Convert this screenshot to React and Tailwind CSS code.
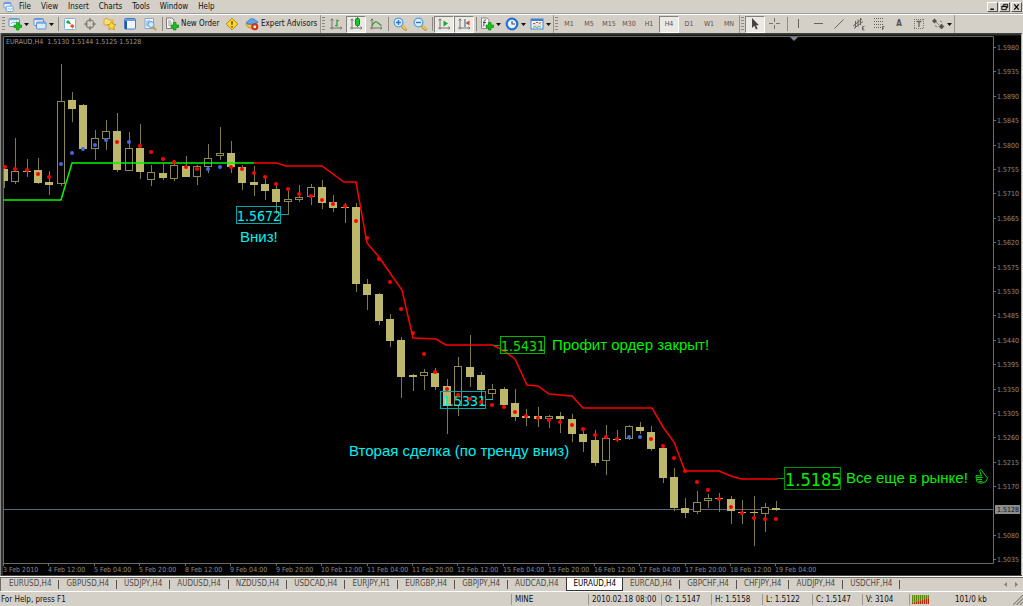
import React, { useState } from 'react';
import clsx from 'clsx';

const MENUS = ['File', 'View', 'Insert', 'Charts', 'Tools', 'Window', 'Help'];
const TIMEFRAMES = ['M1', 'M5', 'M15', 'M30', 'H1', 'H4', 'D1', 'W1', 'MN'];
const TABS = [
    'EURUSD,H4', 'GBPUSD,H4', 'USDJPY,H4', 'AUDUSD,H4', 'NZDUSD,H4', 'USDCAD,H4', 'EURJPY,H1', 'EURGBP,H4',
    'GBPJPY,H4', 'AUDCAD,H4', 'EURAUD,H4', 'EURCAD,H4', 'GBPCHF,H4', 'CHFJPY,H4', 'AUDJPY,H4', 'USDCHF,H4',
];
const TIMES = [
    '3 Feb 2010', '4 Feb 12:00', '5 Feb 04:00', '5 Feb 20:00', '8 Feb 12:00', '9 Feb 04:00', '9 Feb 20:00',
    '10 Feb 12:00', '11 Feb 04:00', '11 Feb 20:00', '12 Feb 12:00', '15 Feb 04:00', '15 Feb 20:00',
    '16 Feb 12:00', '17 Feb 04:00', '17 Feb 20:00', '18 Feb 12:00', '19 Feb 04:00',
];

// high, body top, body bottom, low, rising, dot, dot is blue
const BARS = [
    [165, 169, 181, 188, 0, 167, 0], [138, 171, 182, 184, 1, 169, 0], [159, 171, 172, 177, 0, 170, 0],
    [158, 170, 183, 184, 0, 174, 0], [171, 182, 185, 195, 0, 177, 0], [64, 101, 184, 186, 1, 164, 1],
    [92, 100, 109, 122, 0, 153, 1], [104, 105, 149, 150, 0, 149, 1], [130, 138, 149, 160, 1, 145, 1],
    [120, 131, 139, 150, 1, 140, 1], [113, 131, 170, 172, 0, 142, 0], [132, 148, 171, 171, 1, 142, 1],
    [124, 148, 172, 179, 0, 146, 0], [165, 172, 180, 186, 1, 152, 0], [164, 173, 178, 180, 0, 159, 0],
    [160, 165, 179, 181, 1, 162, 0], [156, 166, 177, 177, 0, 167, 0], [165, 166, 177, 185, 1, 169, 0],
    [144, 158, 167, 173, 1, 169, 1], [127, 153, 156, 160, 1, 167, 1], [141, 153, 167, 173, 0, 167, 0],
    [165, 167, 183, 190, 0, 169, 0], [166, 182, 185, 196, 0, 173, 0], [179, 184, 191, 200, 0, 177, 0],
    [184, 189, 202, 214, 0, 184, 0], [191, 199, 202, 215, 1, 189, 0], [185, 197, 200, 202, 1, 194, 0],
    [184, 187, 197, 205, 1, 196, 0], [180, 187, 203, 209, 0, 200, 0], [195, 202, 208, 212, 0, 204, 0],
    [203, 207, 208, 223, 0, 206, 0], [203, 207, 284, 292, 0, 221, 0], [279, 284, 295, 310, 0, 238, 0],
    [293, 294, 321, 325, 0, 259, 0], [314, 319, 341, 347, 0, 282, 0], [337, 340, 377, 398, 0, 309, 0],
    [374, 375, 377, 391, 0, 333, 0], [369, 372, 376, 390, 1, 354, 0], [368, 373, 387, 390, 0, 372, 0],
    [379, 386, 406, 434, 0, 389, 0], [357, 366, 406, 416, 1, 395, 0], [335, 367, 377, 387, 0, 399, 0],
    [372, 375, 390, 406, 0, 402, 0], [384, 389, 394, 399, 1, 405, 0], [387, 389, 405, 405, 0, 407, 0],
    [389, 403, 417, 421, 0, 412, 0], [409, 416, 418, 426, 0, 416, 0], [407, 416, 419, 427, 0, 418, 0],
    [415, 416, 419, 428, 1, 420, 0], [412, 416, 419, 433, 0, 422, 0], [414, 419, 434, 442, 0, 425, 0],
    [429, 434, 442, 452, 0, 429, 0], [430, 440, 463, 466, 0, 435, 0], [425, 438, 461, 475, 1, 437, 0],
    [430, 439, 440, 442, 0, 439, 0], [425, 426, 439, 440, 1, 437, 1], [422, 427, 431, 434, 0, 437, 1],
    [426, 432, 449, 451, 0, 439, 0], [447, 448, 478, 483, 0, 446, 0], [468, 477, 508, 511, 0, 458, 0],
    [498, 508, 513, 518, 0, 471, 0], [491, 502, 512, 514, 1, 482, 0], [494, 498, 501, 508, 1, 490, 0],
    [493, 498, 499, 512, 0, 499, 0], [496, 499, 511, 524, 0, 507, 0], [500, 512, 513, 524, 0, 513, 0],
    [496, 512, 513, 546, 0, 518, 0], [503, 507, 514, 532, 1, 519, 0], [501, 508, 510, 511, 0, 519, 0],
];

const barX = (i) => Math.round(3.8 + i * 11.36);

const UP_LINE = '3,200 61,200 72,163 254,163';
const DOWN_LINE =
    '254,163 277,163 286,166 322,166 344,182 356,182 367,243 379,257 390,273 402,290 413,338 436,339 446,345 493,345 504,351 515,359 527,385 538,386 549,394 572,396 583,408 652,408 663,427 674,442 685,471 719,471 731,476 741,479 777,479';

const Icon = ({ children }) => (
    <svg viewBox="0 0 14 14" className="h-[14px] w-[14px] shrink-0" fill="none" aria-hidden="true">
        {children}
    </svg>
);

const Plus = () => (
    <path d="M8.5 5.500h2.500v2.500h2.500v2.500h-2.500v2.500h-2.500v-2.500h-2.500v-2.500h2.500z" fill="#17c41c" stroke="#078a0c" strokeWidth=".7" />
);

const Axes = () => <path d="M3 2v10.500M1 11h12M1.700 3.500L3 1.800l1.300 1.700M11.500 9.700L13 11l-1.500 1.300" stroke="#77746e" />;

const Magnifier = ({ plus }) => (
    <Icon>
        <path d="M8.500 8.500l4 4" stroke="#c08a1c" strokeWidth="2.800" strokeLinecap="round" />
        <path d="M8.800 8.500l3.700 3.700" stroke="#f3cf63" strokeWidth="1.400" strokeLinecap="round" />
        <circle cx="5.500" cy="5.500" r="4.300" fill="#d9efff" stroke="#5b9fd8" strokeWidth="1.300" />
        <path d={plus ? 'M3 5.500h5M5.500 3v5' : 'M3 5.500h5'} stroke="#2f6fb5" strokeWidth="1.300" />
    </Icon>
);

const icons = {
    newChart: (
        <Icon>
            <rect x="1" y="1.500" width="10.500" height="8" rx="1" fill="#f4f9ff" stroke="#5b8fcf" />
            <path d="M1 2.500h10.500" stroke="#7fb0e8" strokeWidth="1.500" />
            <path d="M3 7l2-2 2 1 2-1.500" stroke="#8aa" />
            <Plus />
        </Icon>
    ),
    profiles: (
        <Icon>
            <rect x="1" y="1.500" width="9.500" height="7" rx="1" fill="#f4f9ff" stroke="#5b8fcf" />
            <path d="M1 2.500h9.500" stroke="#6ea3e0" strokeWidth="1.500" />
            <rect x="3.500" y="5" width="9.500" height="7" rx="1" fill="#dbe9f8" stroke="#5b8fcf" />
            <path d="M3.500 6h9.500" stroke="#6ea3e0" strokeWidth="1.500" />
        </Icon>
    ),
    marketWatch: (
        <Icon>
            <rect x="1.500" y="1.500" width="11" height="11" rx="1" fill="#fff" stroke="#79aee6" />
            <path d="M3 5l2-2 2 2-2 2z" fill="#22a833" />
            <path d="M5.500 5l2 2" stroke="#22a833" strokeWidth="1.500" />
            <path d="M7 9l2-2 2.500 2-2 2.500z" fill="#e2502a" />
        </Icon>
    ),
    target: (
        <Icon>
            <circle cx="7" cy="7" r="4" stroke="#77746e" strokeWidth="1.200" />
            <path d="M7 1v4M7 9v4M1 7h4M9 7h4" stroke="#77746e" strokeWidth="1.200" />
        </Icon>
    ),
    navigator: (
        <Icon>
            <path d="M1 3l1-1.500h3L6 3h4v5H1z" fill="#fbe07a" stroke="#cf9c1e" strokeWidth=".8" />
            <path d="M8.500 4.500l1.500 2.700 3 .5-2.200 2.100.5 3L8.500 11.400l-2.700 1.400.5-3L4.200 7.700l3-.5z" fill="#ffd83a" stroke="#c28d12" strokeWidth=".8" />
        </Icon>
    ),
    terminal: (
        <Icon>
            <rect x="1.500" y="1.500" width="11" height="10.500" rx="1" fill="#fff" stroke="#3a7fd0" />
            <path d="M2 3h10" stroke="#3a7fd0" strokeWidth="1.500" />
            <path d="M3 4v8" stroke="#26599c" strokeWidth="2" />
            <path d="M5.500 6h6M5.500 8h6M5.500 10h6" stroke="#d5dbe2" strokeWidth=".7" />
        </Icon>
    ),
    tester: (
        <Icon>
            <path d="M2 1.500h8.500v10H2z" fill="#f5faff" stroke="#7aa9dd" />
            <path d="M4 3.500v6M6 3v5M8 4v4" stroke="#4d7ea8" strokeWidth=".8" />
            <path d="M10 10l2.500 2.500" stroke="#d69b27" strokeWidth="2" strokeLinecap="round" />
            <circle cx="8" cy="7.500" r="3" fill="#cfe9ff" stroke="#5b9fd8" />
        </Icon>
    ),
    order: (
        <Icon>
            <path d="M1.500 1h5.500l2 2v8.500H1.500z" fill="#f3f3f3" stroke="#7d7d7d" />
            <path d="M3 4h3M3 6h4M3 8h3" stroke="#8b8b8b" strokeWidth=".8" />
            <Plus />
        </Icon>
    ),
    editor: (
        <Icon>
            <path d="M7 1.200L12.800 7 7 12.800 1.200 7z" fill="#ffd62e" stroke="#b98a0a" />
            <path d="M7 4v3.800M7 9v1.400" stroke="#5c4607" strokeWidth="1.400" />
        </Icon>
    ),
    expert: (
        <Icon>
            <path d="M1 6.500c2 1 8 1 11 0v2C11 12 3 12 2 9z" fill="#f0c040" stroke="#b78518" strokeWidth=".7" />
            <path d="M1 5.500c1-1 2-1 2.500-1.500C4 1.500 9 .500 10.500 3.500c1 .500 2 .500 2.500 1.500-2 3-10 3-12 .5z" fill="#5ea7e6" stroke="#2d71b5" strokeWidth=".7" />
            <circle cx="9.800" cy="9.800" r="3.200" fill="#e23a1c" stroke="#ad1d08" strokeWidth=".6" />
            <rect x="8.600" y="8.600" width="2.400" height="2.400" fill="#fff" />
        </Icon>
    ),
    bars: (
        <Icon>
            <Axes />
            <path d="M8 2.500v7M8 3.500h2M6 8.500h2" stroke="#2f9a35" strokeWidth="1.200" />
        </Icon>
    ),
    candles: (
        <Icon>
            <Axes />
            <path d="M8.500 0v10" stroke="#0b8c14" />
            <rect x="6.500" y="1.500" width="4" height="7" rx="1" fill="#1ec52a" stroke="#0b8c14" />
        </Icon>
    ),
    line: (
        <Icon>
            <Axes />
            <path d="M3 9c1.500-3 3-4.500 4.500-4S10 7 12.500 8.500" stroke="#2f9a35" strokeWidth="1.200" />
        </Icon>
    ),
    autoScroll: (
        <Icon>
            <Axes />
            <path d="M6.500 3.500l4.500 3-4.500 3z" fill="#1ea82a" />
        </Icon>
    ),
    chartShift: (
        <Icon>
            <Axes />
            <path d="M8 2v8" stroke="#3c78b5" strokeWidth="1.200" />
            <path d="M8.500 6l4-2.500v5z" fill="#d9481f" />
        </Icon>
    ),
    indicators: (
        <Icon>
            <path d="M1.500 1h5.500l2 2v8.500H1.500z" fill="#f6f6f6" stroke="#8a8a8a" />
            <path d="M6 3c-2-.5-2 1-2 2.500S4 9 3 9.500M3 5.500h3" stroke="#444" />
            <Plus />
        </Icon>
    ),
    clock: (
        <Icon>
            <circle cx="7" cy="7" r="5.300" fill="#eaf5ff" stroke="#2a6fd0" strokeWidth="2.200" />
            <path d="M7 4v3h3" stroke="#2c4b72" strokeWidth="1.100" />
        </Icon>
    ),
    template: (
        <Icon>
            <rect x="1" y="2" width="12" height="10" fill="#f4f9ff" stroke="#3f83cf" />
            <path d="M1 3h12" stroke="#3f83cf" strokeWidth="2" />
            <path d="M3 6.500h2l1-1h2l1 1 2-1" stroke="#b0413a" strokeWidth=".9" />
            <path d="M2.500 8h9" stroke="#9ab" strokeWidth=".6" />
            <path d="M3 10.500l2-1 2 1 2-1 2 .7" stroke="#2f9a35" strokeWidth=".9" />
        </Icon>
    ),
    cursor: (
        <Icon>
            <path d="M4 1v10l2.300-2.200L8 12.500l1.600-.8L8 8.200h3z" fill="#444" />
        </Icon>
    ),
    crosshair: (
        <Icon>
            <path d="M6.500 1v4M6.500 8v4M1 6.500h4M8 6.500h4" stroke="#77746e" />
        </Icon>
    ),
    vline: <Icon><path d="M6.500 2v9" stroke="#66635e" /></Icon>,
    hline: <Icon><path d="M2 6.500h9" stroke="#66635e" /></Icon>,
    trend: <Icon><path d="M2.500 11.500l9-9" stroke="#66635e" /></Icon>,
    channel: (
        <Icon>
            <path d="M1 9l9-7M2 11.500l9-7M3.500 4v7M6 2.500v7M8.500 1v7" stroke="#66635e" />
            <path d="M12.500 9.500h-2v3.500h2M10.500 11.300h1.500" stroke="#55524d" strokeWidth=".8" />
        </Icon>
    ),
    fibo: (
        <Icon>
            <path d="M2 1.500h10M2 4.500h10M2 7.500h10M2 10.500h7" stroke="#66635e" strokeDasharray="1 1" />
            <path d="M12.500 9.500h-2V13M10.500 11.300h1.500" stroke="#55524d" strokeWidth=".8" />
        </Icon>
    ),
    label: (
        <Icon>
            <path d="M2 2.500h10M2 11.500h10M2.500 2v10M11.500 2v10" stroke="#77746e" strokeDasharray="1 1" />
            <path d="M4.500 4.500h5M7 4.500v5.500" stroke="#66635e" strokeWidth="1.300" />
        </Icon>
    ),
    arrows: (
        <Icon>
            <path d="M1 4l2.500-2.500L6 4 3.500 6.500z" fill="#55524d" />
            <path d="M5 5l3 3M8 9.500l2.500-2.500L13 9.500 10.500 12z" fill="#55524d" stroke="#55524d" strokeWidth=".6" />
            <path d="M4 8.500l2 1.500M9 4l2 1" stroke="#77746e" />
        </Icon>
    ),
};

const Grip = ({ first }) => (
    <div className={clsx('flex w-[6px] shrink-0 justify-end self-stretch py-[2px]', !first && 'border-l border-[#9a978f]')}>
        <div className="mr-px w-[3px] bg-[repeating-linear-gradient(#8d8a83_0_1px,#d4d0c8_1px_3px)]" />
    </div>
);

const Separator = () => (
    <div className="flex w-1 shrink-0 justify-center self-stretch py-[2px]">
        <div className="w-px bg-[#8d8a83]" />
    </div>
);

const ToolButton = ({ title, pressed, menu, children }) => (
    <button
        title={title}
        aria-label={title}
        aria-pressed={pressed}
        className={clsx(
            'flex h-[17px] shrink-0 items-center border text-[7px] text-[#55524d]',
            menu ? 'w-[25px] pl-px' : 'w-5 justify-center',
            pressed ? 'border-t-[#85827b] border-r-white border-b-white border-l-[#85827b] bg-[#ebe9e4]' : 'border-transparent'
        )}
    >
        {children}
        {menu && (
            <svg viewBox="0 0 5 3" className="ml-[2px] h-[3px] w-[5px] shrink-0" aria-hidden="true">
                <path d="M0 0h5L2.500 3z" fill="#111" />
            </svg>
        )}
    </button>
);

const MenuBar = () => (
    <header className="flex h-[14px] items-center border-b border-[#a19e97] pl-[3px] text-[8px] text-[#111]">
        <svg viewBox="0 0 12 12" className="mr-[5px] h-3 w-[11px]" fill="none" aria-hidden="true">
            <rect x="1" y="1" width="7.500" height="6" rx="1" fill="#e9f4ff" stroke="#5e9ade" />
            <path d="M1 2h7.500" stroke="#5e9ade" strokeWidth="1.500" />
            <rect x="3.500" y="5" width="7.500" height="6" rx="1" fill="#f7fbff" stroke="#5e9ade" />
            <path d="M5 9l1.500-1.500L8 9l2-2" stroke="#5e9ade" strokeWidth=".8" />
        </svg>
        <nav className="flex gap-[10px]">
            {MENUS.map((menu) => (
                <button key={menu}>{menu}</button>
            ))}
        </nav>
        <div className="ml-auto flex gap-px pr-px">
            {[
                ['Minimize', 'M2 7h4', 1.6],
                ['Restore', 'M3.500 3V1.500H8V5H6.500M1.500 3.500h5v4h-5zM1.500 4h5', 1],
                ['Close', 'M2 1.500l5 6M7 1.500l-5 6', 1.3],
            ].map(([title, path, width]) => (
                <button
                    key={title}
                    aria-label={title}
                    className="flex h-[10px] w-[11px] items-center justify-center border border-t-white border-r-[#555] border-b-[#555] border-l-white"
                >
                    <svg viewBox="0 0 9 9" className="h-2 w-[9px]" fill="none" aria-hidden="true">
                        <path d={path} stroke="#000" strokeWidth={width} />
                    </svg>
                </button>
            ))}
        </div>
    </header>
);

const Toolbar = () => {
    const [timeframe, setTimeframe] = useState('H4');

    return (
        <div className="flex h-[19px] items-center border-t border-t-white">
            <Grip first />
            <ToolButton title="New Chart" menu>{icons.newChart}</ToolButton>
            <ToolButton title="Profiles" menu>{icons.profiles}</ToolButton>
            <Separator />
            <ToolButton title="Market Watch">{icons.marketWatch}</ToolButton>
            <ToolButton title="Data Window">{icons.target}</ToolButton>
            <ToolButton title="Navigator">{icons.navigator}</ToolButton>
            <ToolButton title="Terminal">{icons.terminal}</ToolButton>
            <ToolButton title="Strategy Tester">{icons.tester}</ToolButton>
            <Separator />
            <button className="flex w-[58px] shrink-0 items-center gap-[2px] pl-px text-[8px] whitespace-nowrap text-[#111]">
                {icons.order}
                New Order
            </button>
            <ToolButton title="MetaEditor">{icons.editor}</ToolButton>
            <button className="flex w-[78px] shrink-0 items-center gap-[2px] pl-[3px] text-[8px] whitespace-nowrap text-[#111]">
                {icons.expert}
                Expert Advisors
            </button>
            <Grip />
            <ToolButton title="Bar Chart">{icons.bars}</ToolButton>
            <ToolButton title="Candlesticks" pressed>{icons.candles}</ToolButton>
            <ToolButton title="Line Chart">{icons.line}</ToolButton>
            <Separator />
            <ToolButton title="Zoom In"><Magnifier plus /></ToolButton>
            <ToolButton title="Zoom Out"><Magnifier /></ToolButton>
            <Separator />
            <ToolButton title="Auto Scroll" pressed>{icons.autoScroll}</ToolButton>
            <ToolButton title="Chart Shift" pressed>{icons.chartShift}</ToolButton>
            <Separator />
            <ToolButton title="Indicators" menu>{icons.indicators}</ToolButton>
            <ToolButton title="Periods" menu>{icons.clock}</ToolButton>
            <ToolButton title="Templates" menu>{icons.template}</ToolButton>
            <Grip />
            {TIMEFRAMES.map((tf) => (
                <button
                    key={tf}
                    onClick={() => setTimeframe(tf)}
                    className={clsx(
                        'h-[17px] w-5 shrink-0 border text-[7px] text-[#55524d]',
                        tf === timeframe
                            ? 'border-t-[#85827b] border-r-white border-b-white border-l-[#85827b] bg-[#ebe9e4]'
                            : 'border-transparent'
                    )}
                >
                    {tf}
                </button>
            ))}
            <Grip />
            <ToolButton title="Cursor" pressed>{icons.cursor}</ToolButton>
            <ToolButton title="Crosshair">{icons.crosshair}</ToolButton>
            <Separator />
            <ToolButton title="Vertical Line">{icons.vline}</ToolButton>
            <ToolButton title="Horizontal Line">{icons.hline}</ToolButton>
            <ToolButton title="Trendline">{icons.trend}</ToolButton>
            <ToolButton title="Equidistant Channel">{icons.channel}</ToolButton>
            <ToolButton title="Fibonacci Retracement">{icons.fibo}</ToolButton>
            <ToolButton title="Text"><span className="text-[8px] font-bold">A</span></ToolButton>
            <ToolButton title="Text Label">{icons.label}</ToolButton>
            <ToolButton title="Arrows" menu>{icons.arrows}</ToolButton>
            <div className="w-px self-stretch bg-[#9a978f]" />
        </div>
    );
};

const Chart = () => (
    <svg viewBox="0 33 1023 543" className="block w-full bg-black" role="img" aria-label="EURAUD,H4">
        {/* window frame */}
        <path d="M0 33.500h1023" stroke="#55554f" />
        <path d="M.5 33v543" stroke="#8a8a86" />
        <path d="M1 34.500h1020M2 34v541" stroke="#2d302d" strokeWidth="2" />
        <path d="M1021.500 34v542" stroke="#b5b2ab" />
        <path d="M1022.500 33v543" stroke="#e8e6e0" />
        <path d="M1 575.500h1021" stroke="#44443f" />
        <path d="M3.500 563V36.500H993.500V563.500H3.500" fill="none" stroke="#6a6a6a" />
        <path d="M790 37h8l-4 4z" fill="#778899" />

        {/* price and time scales */}
        {Array.from({ length: 22 }, (_, i) => {
            const y = Math.round(47 + i * 24.4);
            if (i === 19) return null;
            return (
                <g key={i}>
                    <path d={`M994 ${y + 0.5}h2`} stroke="#6a6a6a" />
                    <text x="997" y={y + 3} fontSize="7" fill="#8c8c8c">{(1.598 - i * 0.0045).toFixed(4)}</text>
                </g>
            );
        })}
        {TIMES.map((time, i) => {
            const x = Math.round(3 + i * 45.44);
            return (
                <g key={time}>
                    <path d={`M${x + 0.5} 563v3`} stroke="#6a6a6a" />
                    <text x={x} y="572" fontSize="7" fill="#8c8c8c">{time}</text>
                </g>
            );
        })}
        <text x="6" y="44" fontSize="7" fill="#9a9a9a">EURAUD,H4&#160; 1.5130 1.5144 1.5125 1.5128</text>

        <path d="M4 509.500h989" stroke="#5a6673" />
        <rect x="995" y="505" width="25" height="9" fill="#8c8c8c" />
        <text x="997" y="512" fontSize="7" fill="#111">1.5128</text>

        {/* candles */}
        {BARS.map(([high, top, bottom, low, rising], i) => {
            const x = barX(i);
            const left = Math.max(x - 4, 4);
            return (
                <g key={i}>
                    <path d={`M${x + 0.5} ${high}V${top}M${x + 0.5} ${bottom}V${low}`} stroke="#80794a" />
                    {rising ? (
                        <rect x={left + 0.5} y={top + 0.5} width="7" height={bottom - top - 1} fill="#000" stroke="#8f8853" />
                    ) : (
                        <rect x={left} y={top} width={x + 4 - left} height={Math.max(bottom - top, 1)} fill="#bdb76b" />
                    )}
                </g>
            );
        })}

        <polyline points={UP_LINE} fill="none" stroke="#00f800" strokeWidth="1.500" />
        <polyline points={DOWN_LINE} fill="none" stroke="#fa0000" strokeWidth="1.500" />

        {/* price labels and notes */}
        <g fill="none">
            <path d="M281 214.500h7" stroke="#00a5a5" />
            <path d="M486 399.500h7" stroke="#00c8c8" />
            <path d="M493 345.500h7M777 478.500h7" stroke="#00a000" />
            <rect x="236.500" y="206.500" width="44" height="17" stroke="#00a5a5" />
            <rect x="440.500" y="391.500" width="45" height="17" stroke="#00a5a5" />
            <rect x="500.500" y="336.500" width="44" height="17" stroke="#00b400" />
            <rect x="784.500" y="467.500" width="56" height="22" stroke="#009000" />
        </g>
        <g fontSize="14">
            <text x="237" y="221" fill="#00f0f0">1.5672</text>
            <text x="442" y="406" fill="#00f0f0">1.5331</text>
            <text x="501" y="351" fill="#00e600">1.5431</text>
            <text x="785" y="486" fontSize="18" fill="#00f000">1.5185</text>
        </g>
        <g fontSize="15" fontFamily="Liberation Sans, sans-serif">
            <text x="240" y="242" fill="#00f0f0">Вниз!</text>
            <text x="349" y="456" fill="#00f0f0">Вторая сделка (по тренду вниз)</text>
            <text x="552" y="350" fill="#00f000">Профит ордер закрыт!</text>
            <text x="846" y="483" fill="#00f000">Все еще в рынке!</text>
        </g>
        <g stroke="#00d000" fill="none">
            <path d="M976 475.500l5.500.500-2-5.500 1.500-1 4 5.500 2.500 3-1.500 3.500-3.500 1.500h-4l-2-2z" />
            <path d="M976.500 477.500h6M977 479.500h5M978.500 481.500h4" />
        </g>

        {BARS.map(([, , , , , dot, blue], i) => (
            <circle key={i} cx={Math.max(barX(i), 5)} cy={dot} r="2" fill={blue ? '#4169e1' : '#ff0000'} />
        ))}
    </svg>
);

const ChartTabs = () => {
    const [active, setActive] = useState('EURAUD,H4');
    const activeIndex = TABS.indexOf(active);

    return (
        <div className="flex h-4 items-start border-y border-y-white text-[8px] text-[#4d4a45]">
            <div className="flex h-[14px] flex-1 items-start border-t border-l border-[#6c6963] pl-px">
                {TABS.map((tab, i) => (
                    <button
                        key={tab}
                        onClick={() => setActive(tab)}
                        className={clsx(
                            'flex shrink-0 items-center',
                            tab === active
                                ? 'h-[13px] border-x border-b border-[#333] bg-white px-[6px] text-black'
                                : 'h-3 pl-[7px]'
                        )}
                    >
                        {tab}
                        {tab !== active && (
                            <span className={clsx('ml-[7px] h-[9px] w-px', i + 1 === activeIndex ? 'bg-transparent' : 'bg-[#55524d]')} />
                        )}
                    </button>
                ))}
                <div className="ml-auto flex h-3 items-center gap-2 pr-[5px]">
                    <button aria-label="Scroll left">
                        <svg viewBox="0 0 3 5" className="h-[5px] w-[3px]" aria-hidden="true"><path d="M3 0v5L0 2.500z" fill="#85827b" /></svg>
                    </button>
                    <button aria-label="Scroll right">
                        <svg viewBox="0 0 3 5" className="h-[5px] w-[3px]" aria-hidden="true"><path d="M0 0v5L3 2.500z" fill="#85827b" /></svg>
                    </button>
                </div>
            </div>
        </div>
    );
};

const StatusBar = () => (
    <footer className="flex h-[14px] items-center text-[8px] leading-[11px] whitespace-nowrap text-[#111]">
        <span className="flex-1 pl-px">For Help, press F1</span>
        <span className="w-[77px] border-l border-[#9a978f] pl-[3px]">MINE</span>
        <span className="w-[73px] border-l border-[#9a978f] pl-[3px]">2010.02.18 08:00</span>
        <span className="w-[50px] border-l border-[#9a978f] pl-[3px]">O: 1.5147</span>
        <span className="w-[51px] border-l border-[#9a978f] pl-[3px]">H: 1.5158</span>
        <span className="w-[50px] border-l border-[#9a978f] pl-[3px]">L: 1.5122</span>
        <span className="w-[50px] border-l border-[#9a978f] pl-[3px]">C: 1.5147</span>
        <span className="w-[47px] border-l border-[#9a978f] pl-[3px]">V: 3104</span>
        <span className="flex w-[114px] items-center border-l border-[#9a978f] pl-[2px]">
            <svg viewBox="0 0 17 9" className="h-[9px] w-[17px]" aria-hidden="true">
                <path d="M0 0h17v3L0 8z" fill="#a3b56a" />
                <path d="M0 8l17-5v6H0z" fill="#cf8b78" />
                {Array.from({ length: 9 }, (_, i) => (
                    <g key={i}>
                        <rect x={i * 2} y="0" width="1" height={8 - i * 0.6} fill="#5c8a10" />
                        <rect x={i * 2} y={8 - i * 0.6} width="1" height={1 + i * 0.6} fill="#b0280f" />
                    </g>
                ))}
            </svg>
            <span className="ml-[26px] flex-1">101/0 kb</span>
            <svg viewBox="0 0 10 10" className="h-[10px] w-[10px] self-end" aria-hidden="true">
                <path d="M0 10L10 0M3.500 10L10 3.500M7 10l3-3" stroke="#85827b" strokeWidth="1.200" />
            </svg>
        </span>
    </footer>
);

const App = () => (
    <div className="flex min-h-screen flex-col overflow-hidden bg-[#d4d0c8] font-['DejaVu_Sans_Condensed','DejaVu_Sans',sans-serif] leading-none">
        <MenuBar />
        <Toolbar />
        <Chart />
        <ChartTabs />
        <StatusBar />
    </div>
);

export default App;
